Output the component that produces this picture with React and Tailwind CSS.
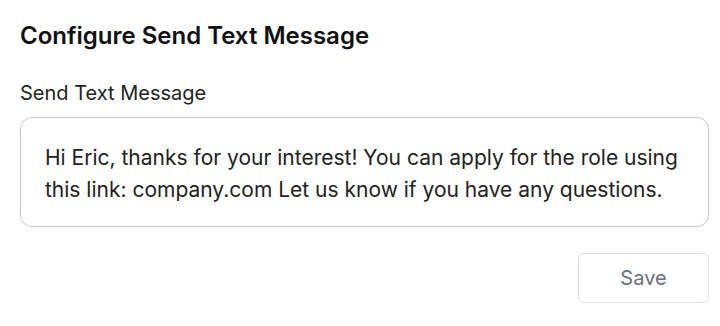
import React from "react";

const message =
  "Hi Eric, thanks for your interest! You can apply for the role using this link: company.com Let us know if you have any questions.";

const App = () => {
  return (
    <div
      className="w-[720px] h-[326px] bg-white px-5 pt-5"
      style={{ fontFamily: "Inter, 'Noto Sans', sans-serif" }}
    >
      <h2 className="text-2xl leading-8 font-semibold text-[#111111]">
        Configure Send Text Message
      </h2>
      <form className="mt-[27px]">
        <label
          htmlFor="textMessage"
          className="block text-xl leading-7 text-[#222222]"
        >
          Send Text Message
        </label>
        <textarea
          id="textMessage"
          name="textMessage"
          className="mt-[10px] block w-[689px] h-[110px] resize-none rounded-xl border border-[#c9cacf] bg-white pl-6 pr-5 pt-6 pb-5 text-[21px] leading-8 text-[#222222] outline-none"
          defaultValue={message}
        />
        <div className="flex justify-end w-[689px] mt-[26px]">
          <button
            type="button"
            className="w-[131px] h-[50px] rounded-md border border-[#dfe0e4] bg-white text-xl text-[#6b7080]"
          >
            Save
          </button>
        </div>
      </form>
    </div>
  );
};

export default App;
